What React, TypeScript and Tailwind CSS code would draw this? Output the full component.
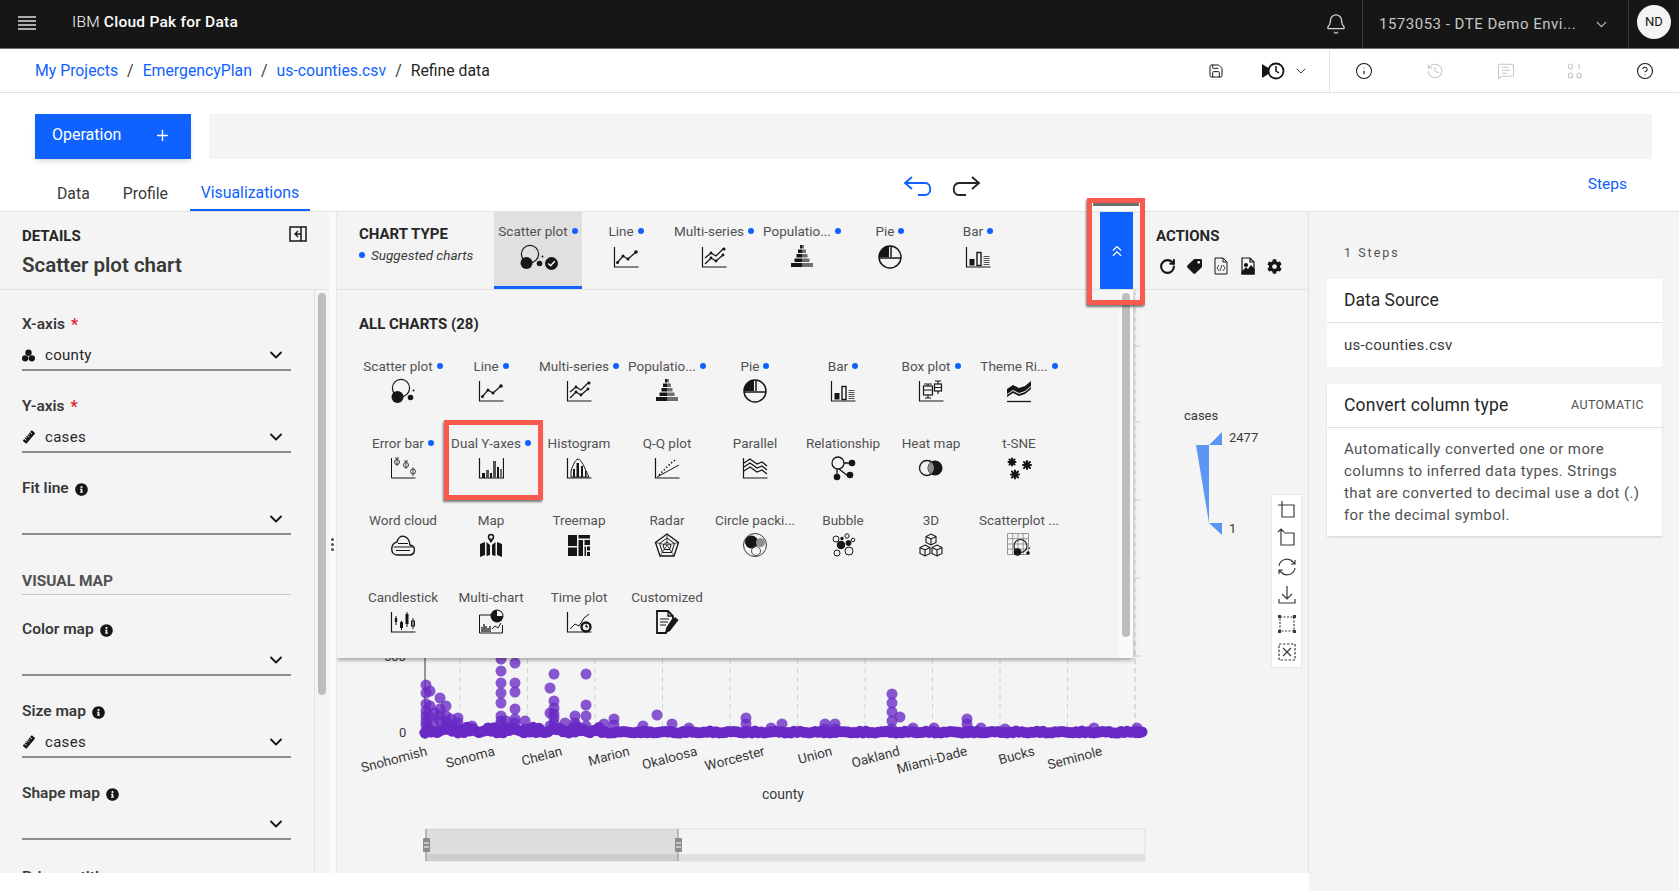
import { Bell, ChevronDown, ChevronsUp, CircleHelp, Info, History, MessageSquareText, Save, Plus, RotateCw } from 'lucide-react'
import { FaCog, FaInfoCircle, FaRuler, FaTag } from 'react-icons/fa'
import type { ReactNode } from 'react'

const k = '#161616'

const Axis = () => <path d="M1.5 3v20h24" fill="none" stroke={k} strokeWidth="1.2" />

const icons: Record<string, ReactNode> = {
  scatter: (
    <>
      <circle cx="11" cy="10" r="8.6" fill="none" stroke={k} strokeWidth="1.2" />
      <circle cx="7.5" cy="19" r="6" fill={k} />
      <circle cx="20.5" cy="19.5" r="2.8" fill={k} />
      <circle cx="23.5" cy="12.5" r="1" fill={k} />
    </>
  ),
  line: (
    <>
      <Axis />
      <path d="M4 19l6-7 5 3 8-7" fill="none" stroke={k} strokeWidth="1.3" />
      <circle cx="4.5" cy="18.5" r="1.5" fill={k} />
      <circle cx="10" cy="12" r="1.5" fill={k} />
      <circle cx="15" cy="15" r="1.5" fill={k} />
      <circle cx="23" cy="8" r="1.8" fill={k} />
    </>
  ),
  multi: (
    <>
      <Axis />
      <path d="M4 14l6-5 5 3 8-8M4 20l6-6 5 3 7-6" fill="none" stroke={k} strokeWidth="1.3" />
      <circle cx="10" cy="9" r="1.4" fill={k} />
      <circle cx="23" cy="5" r="1.6" fill={k} />
      <circle cx="10" cy="14" r="1.4" fill={k} />
      <circle cx="15" cy="17" r="1.4" fill={k} />
      <circle cx="22" cy="11" r="1.4" fill={k} />
    </>
  ),
  population: (
    <>
      <path d="M11 1h2v3.500h-2zM9 5.500h4V9H9zM7.500 10H13v3.500H7.500zM5.500 14.500H13V18H5.500zM2 19h11v4H2z" fill={k} />
      <path d="M13 1h2v3.500h-2zM13 5.500h4V9h-4zM13 10h5.500v3.500H13zM13 14.500h7.500V18H13zM13 19h11v4H13z" fill="#6f6f6f" />
    </>
  ),
  pie: (
    <>
      <circle cx="13" cy="13" r="11" fill="none" stroke={k} strokeWidth="1.5" />
      <path d="M2 13A11 11 0 0 1 12 2v11z" fill={k} />
      <path d="M2 14h22M14 2v11" fill="none" stroke={k} strokeWidth="1.5" />
    </>
  ),
  bar: (
    <>
      <Axis />
      <rect x="4.500" y="15" width="5" height="6.500" fill={k} />
      <rect x="12" y="8.500" width="4" height="13" fill="none" stroke={k} strokeWidth="1.4" />
      <path d="M18.500 12.500h6M18.500 14.500h6M18.500 16.500h6M18.500 18.500h6M18.500 20.500h6" stroke="#525252" strokeWidth="1" />
    </>
  ),
  box: (
    <>
      <Axis />
      <path d="M10 6v2M6 6h8M10 17v3M7 20h6M20 3v3M17 3h6M20 13v3" fill="none" stroke={k} strokeWidth="1.1" />
      <rect x="5.500" y="8" width="9" height="9" fill="none" stroke={k} strokeWidth="1.2" />
      <path d="M5.500 12h9M16.500 9.500h7" stroke={k} strokeWidth="1.1" />
      <rect x="16.500" y="6" width="7" height="7" fill="none" stroke={k} strokeWidth="1.2" />
    </>
  ),
  theme: (
    <>
      <path d="M1 11l6-4 6 3 6-2 6-5v5l-6 5-6 2-6-3-6 4z" fill={k} />
      <path d="M1 17l6-4 6 3 6-2 6-5v2l-6 5-6 2-6-3-6 4z" fill={k} />
      <path d="M1 23.500h24" stroke={k} strokeWidth="1.3" />
    </>
  ),
  error: (
    <>
      <path d="M1.500 3v20h24" fill="none" stroke={k} strokeWidth="1" />
      <circle cx="7" cy="7" r="2.500" fill="none" stroke="#393939" />
      <path d="M7 3v8M5 3h4M16 6v8M14 6h4M23 12v9" stroke="#393939" strokeWidth="0.9" />
      <circle cx="16" cy="10" r="2.500" fill="none" stroke="#393939" />
      <circle cx="23" cy="16.500" r="2.500" fill="none" stroke="#393939" />
    </>
  ),
  dual: (
    <>
      <path d="M1.500 3v20h24V3" fill="none" stroke={k} strokeWidth="1.2" />
      <rect x="4" y="18" width="3" height="5" fill={k} />
      <rect x="8" y="15" width="3" height="8" fill="#525252" />
      <rect x="12" y="18" width="2" height="5" fill={k} />
      <rect x="15" y="6" width="3" height="17" fill="#525252" />
      <rect x="19" y="12" width="2" height="11" fill={k} />
      <rect x="22" y="14" width="2" height="9" fill="#6f6f6f" />
    </>
  ),
  histogram: (
    <>
      <Axis />
      <path d="M5 22V16c2-6 4-11 7-12 4 1 6 8 11 18z" fill="none" stroke={k} strokeWidth="1" />
      <path d="M7 22V14h2v8zM10.500 22V8h2.500v14zM15 22V11h2v11zM19 22v-6h1.500v6z" fill={k} />
    </>
  ),
  qq: (
    <>
      <Axis />
      <path d="M3 22L25 10" stroke={k} strokeWidth="1" />
      <path d="M5 20l3-3 3-3 3-3 3-3 3-2 2-2" fill="none" stroke={k} strokeWidth="1.6" strokeDasharray="1.4 2" />
    </>
  ),
  parallel: (
    <>
      <Axis />
      <path d="M2 8l6-4 7 5 5-2 5 4M2 12l6-4 7 5 5-2 5 4M2 16l6-4 7 5 5-2 5 4" fill="none" stroke={k} strokeWidth="1.3" />
    </>
  ),
  relationship: (
    <>
      <path d="M12 8h10M9 14l9 7M7 14v8" stroke={k} strokeWidth="1.3" />
      <circle cx="8" cy="8" r="6" fill="#f4f4f4" stroke={k} strokeWidth="1.3" />
      <circle cx="22" cy="8" r="3.300" fill={k} />
      <circle cx="7" cy="22" r="3.300" fill={k} />
      <circle cx="20" cy="20" r="3.300" fill={k} />
    </>
  ),
  heat: (
    <>
      <circle cx="9" cy="13" r="7.500" fill="none" stroke={k} strokeWidth="1.3" />
      <circle cx="17" cy="13" r="7.500" fill={k} />
      <path d="M13 7a7.500 7.500 0 0 0 0 12 7.500 7.500 0 0 0 0-12z" fill="#8d8d8d" />
    </>
  ),
  tsne: (
    <g stroke={k} strokeWidth="2" strokeLinecap="round">
      <path d="M6 3.500v7M2.500 7h7M3.500 4.500l5 5M8.500 4.500l-5 5" />
      <path d="M21 6v8M17 10h8M18 7l6 6M24 7l-6 6" />
      <path d="M9 15.500v8M5 19.500h8M6 16.500l6 6M12 16.500l-6 6" />
    </g>
  ),
  cloud: (
    <>
      <path d="M7 23h12c7 0 7-9 1-10C19 3 9 1 7 10 0 11 0 23 7 23z" fill="none" stroke={k} strokeWidth="1.400" />
      <path d="M8 11.500h10M3.500 15h19M6 18.500h14" stroke={k} strokeWidth="1.100" />
    </>
  ),
  map: (
    <>
      <circle cx="13" cy="5" r="2.500" fill="none" stroke={k} strokeWidth="1.5" />
      <path d="M13 11l-2-3h4zM2 12l5-2v13l-5 2zM8.500 10l3.500 3v10l-3.500 1zM14 13l3.500-3v14L14 23zM19 10l5 2v13l-5-2z" fill={k} />
    </>
  ),
  treemap: (
    <path d="M2 3h9v11H2zM12.500 3H24v3.500H12.500zM12.500 8H17v16h-4.500zM18.500 8H24v5h-5.500zM2 15.500h9V24H2zM18.500 14.500H20v9.500h-1.500zM21 14.500h3v4h-3zM21 20h3v4h-3z" fill={k} />
  ),
  radar: (
    <g fill="none" stroke={k} strokeWidth="1">
      <path d="M13 2l11.500 8.500-4.500 13.500H6L1.500 10.500z" strokeWidth="1.3" />
      <path d="M13 6l7.500 5.500-3 9h-9l-3-9z" />
      <path d="M13 10l4 3-1.500 4.500h-5L9 13z" />
      <path d="M13 2v11M24.500 10.500L13 13M20 24l-7-11M6 24l7-11M1.500 10.500L13 13" strokeWidth="0.7" />
    </g>
  ),
  packing: (
    <>
      <circle cx="13" cy="13" r="11.500" fill="none" stroke="#393939" />
      <circle cx="9.500" cy="10" r="6.500" fill={k} />
      <circle cx="18.500" cy="10.500" r="4.500" fill="#8d8d8d" />
      <circle cx="14" cy="19" r="4.500" fill="none" stroke="#525252" />
    </>
  ),
  bubble: (
    <g fill="none" stroke={k} strokeWidth="1">
      <circle cx="6" cy="7" r="3" />
      <circle cx="17" cy="4" r="2.200" />
      <circle cx="23" cy="8" r="1.800" />
      <circle cx="7" cy="21" r="3" />
      <circle cx="19" cy="19" r="4" />
      <circle cx="11" cy="13" r="3.800" fill={k} />
      <circle cx="18.500" cy="11" r="2.500" fill={k} />
      <circle cx="12" cy="6.500" r="1.300" fill={k} />
    </g>
  ),
  cube: (
    <g fill="none" stroke={k} strokeWidth="1.1">
      <path d="M13 2l5 2.500v6L13 13l-5-2.500v-6zM8 4.500l5 2.500 5-2.500M13 7v6" />
      <path d="M7 13l5 2.500v6L7 24l-5-2.500v-6zM2 15.500L7 18l5-2.500M7 18v6" />
      <path d="M19 13l5 2.500v6L19 24l-5-2.500v-6zM14 15.500l5 2.500 5-2.500M19 18v6" />
    </g>
  ),
  matrix: (
    <>
      <path d="M1.500 1.500h21v21h-21zM1.500 6.700h21M1.500 12h21M1.500 17.200h21M6.700 1.500v21M12 1.500v21M17.200 1.500v21" fill="none" stroke="#8d8d8d" strokeWidth="0.9" />
      <circle cx="14.500" cy="14" r="6.500" fill="none" stroke={k} strokeWidth="1.1" />
      <circle cx="11.500" cy="20" r="3.800" fill={k} />
      <circle cx="22" cy="21" r="1.800" fill={k} />
      <circle cx="23.500" cy="16" r="0.800" fill={k} />
    </>
  ),
  candle: (
    <>
      <Axis />
      <path d="M6 7v9M11.500 12v9M17 3v15M23 9v11" stroke={k} strokeWidth="1" />
      <rect x="4.800" y="9" width="2.400" height="4" fill={k} />
      <rect x="10" y="13" width="3" height="6" fill={k} />
      <rect x="15.500" y="5" width="3" height="10" fill={k} />
      <rect x="21.500" y="12" width="3" height="5" fill="none" stroke={k} />
    </>
  ),
  multichart: (
    <>
      <path d="M13 6H1.500v18h23V16" fill="none" stroke={k} strokeWidth="1" />
      <path d="M4 23v-5M6 23v-8M8 23v-6M10 23v-4M12 23v-6" stroke={k} strokeWidth="1.3" />
      <path d="M14 20l3-3 3 2 3-5" fill="none" stroke={k} />
      <circle cx="19" cy="7" r="6.500" fill={k} />
      <path d="M19 7V1.500A5.500 5.500 0 0 1 24.500 7z" fill="#f4f4f4" />
    </>
  ),
  time: (
    <>
      <Axis />
      <path d="M4 20l5-5 4 2 5-8 5-4" fill="none" stroke={k} strokeWidth="1" />
      <circle cx="20" cy="18" r="4.500" fill="#f4f4f4" stroke={k} strokeWidth="2.400" />
      <path d="M20 15.500V18h2" stroke={k} />
    </>
  ),
  custom: (
    <>
      <path d="M3 2h11l5 5v3l-6 9-1 5H3z" fill="none" stroke={k} strokeWidth="1.800" />
      <path d="M14 2v5h5" fill="none" stroke={k} strokeWidth="1.300" />
      <path d="M6 10h9M6 13h8M6 16h6" stroke={k} strokeWidth="1.200" />
      <path d="M21 8l3.500 3L16 22l-4 2 .5-4.500z" fill={k} />
    </>
  ),
}

function ChartIcon({ name }: { name: string }) {
  return (
    <svg viewBox="0 0 26 26" className="w-[26px] h-[26px]">
      {icons[name]}
    </svg>
  )
}

const suggested = [
  { label: 'Scatter plot', icon: 'scatter' },
  { label: 'Line', icon: 'line' },
  { label: 'Multi-series', icon: 'multi' },
  { label: 'Populatio...', icon: 'population' },
  { label: 'Pie', icon: 'pie' },
  { label: 'Bar', icon: 'bar' },
]

const allCharts = [
  { label: 'Scatter plot', icon: 'scatter', dot: true },
  { label: 'Line', icon: 'line', dot: true },
  { label: 'Multi-series', icon: 'multi', dot: true },
  { label: 'Populatio...', icon: 'population', dot: true },
  { label: 'Pie', icon: 'pie', dot: true },
  { label: 'Bar', icon: 'bar', dot: true },
  { label: 'Box plot', icon: 'box', dot: true },
  { label: 'Theme Ri...', icon: 'theme', dot: true },
  { label: 'Error bar', icon: 'error', dot: true },
  { label: 'Dual Y-axes', icon: 'dual', dot: true },
  { label: 'Histogram', icon: 'histogram' },
  { label: 'Q-Q plot', icon: 'qq' },
  { label: 'Parallel', icon: 'parallel' },
  { label: 'Relationship', icon: 'relationship' },
  { label: 'Heat map', icon: 'heat' },
  { label: 't-SNE', icon: 'tsne' },
  { label: 'Word cloud', icon: 'cloud' },
  { label: 'Map', icon: 'map' },
  { label: 'Treemap', icon: 'treemap' },
  { label: 'Radar', icon: 'radar' },
  { label: 'Circle packi...', icon: 'packing' },
  { label: 'Bubble', icon: 'bubble' },
  { label: '3D', icon: 'cube' },
  { label: 'Scatterplot ...', icon: 'matrix' },
  { label: 'Candlestick', icon: 'candle' },
  { label: 'Multi-chart', icon: 'multichart' },
  { label: 'Time plot', icon: 'time' },
  { label: 'Customized', icon: 'custom' },
]

// columns of points, x in page px, y values in page px
const columns: [number, number[]][] = [
  [425, [684, 692, 703, 710, 715, 720, 724, 730]],
  [429, [690, 705, 716]],
  [433, [712, 722]],
  [439, [697, 708, 714, 720, 730]],
  [445, [705, 715, 720, 725]],
  [450, [718, 724]],
  [457, [717, 722, 727]],
  [471, [725]],
  [500, [658, 670, 682, 692, 702, 715, 720, 723, 730]],
  [505, [720, 726]],
  [514, [662, 682, 691, 708, 718, 722, 728]],
  [524, [720, 728]],
  [549, [687, 712, 725]],
  [553, [673, 700, 707, 713, 717, 722, 727]],
  [564, [722, 730]],
  [574, [715, 722, 725]],
  [585, [673, 704, 715, 725]],
  [603, [723]],
  [613, [718, 724]],
  [642, [725]],
  [656, [714]],
  [671, [723]],
  [688, [727]],
  [745, [717, 723, 730]],
  [770, [727]],
  [781, [723]],
  [824, [723, 728]],
  [834, [723, 728]],
  [891, [693, 702, 711, 720, 728]],
  [899, [716]],
  [912, [727]],
  [933, [727]],
  [966, [718, 723, 730]],
  [980, [727]],
  [1004, [728]],
  [1093, [727]],
  [1136, [727, 730]],
]

const baseline = Array.from({ length: 240 }, (_, i) => {
  const x = 424 + i * 3
  const y = 732 - Math.abs(Math.sin(i * 1.7) * Math.cos(i * 0.43)) * (x < 600 ? 6 : 2)
  return { x, y }
})

const xLabels = ['Snohomish', 'Sonoma', 'Chelan', 'Marion', 'Okaloosa', 'Worcester', 'Union', 'Oakland', 'Miami-Dade', 'Bucks', 'Seminole']

function ChartCanvas() {
  return (
    <svg viewBox="336 289 973 583" className="block w-[973px] h-[583px]" fontFamily="Roboto, sans-serif">
      {Array.from({ length: 11 }, (_, i) => (
        <line key={i} x1={459 + i * 67.5} x2={459 + i * 67.5} y1="640" y2="738" stroke="#d1d1d1" strokeDasharray="5 4" />
      ))}
      <line x1="1134" x2="1134" y1="289" y2="738" stroke="#d1d1d1" strokeDasharray="5 4" />
      {[345, 421, 499, 577, 655].map((y) => (
        <line key={y} x1="1134" x2="1140" y1={y} y2={y} stroke="#d1d1d1" />
      ))}
      <line x1="424" x2="424" y1="640" y2="738" stroke="#393939" />
      <line x1="418" x2="424" y1="731" y2="731" stroke="#393939" />
      <text x="398" y="736" fontSize="13" fill="#393939">0</text>
      <text x="383" y="660" fontSize="13" fill="#393939">500</text>
      <g fill="#6929c4">
        {columns.flatMap(([x, ys]) => ys.map((y) => <circle key={`${x}-${y}`} cx={x} cy={y} r="5.500" fillOpacity="0.78" />))}
        {baseline.map((p) => (
          <circle key={p.x} cx={p.x} cy={p.y} r="5.500" />
        ))}
      </g>
      {xLabels.map((label, i) => {
        const x = 427 + i * 67.5
        return (
          <text key={label} x={x} y="754" fontSize="13.500" fill="#393939" textAnchor="end" transform={`rotate(-15 ${x} 754)`}>
            {label}
          </text>
        )
      })}
      <text x="782" y="798" fontSize="14" fill="#393939" textAnchor="middle">county</text>

      <rect x="425" y="828" width="719" height="32" fill="#f4f4f4" stroke="#e0e0e0" />
      <rect x="425" y="853" width="719" height="7" fill="#e0e0e0" />
      <rect x="425" y="828" width="252" height="32" fill="#8d8d8d" fillOpacity="0.22" />
      <line x1="425" x2="425" y1="828" y2="860" stroke="#8d8d8d" />
      <line x1="677" x2="677" y1="828" y2="860" stroke="#8d8d8d" />
      <rect x="422" y="837" width="7" height="14" rx="1" fill="#8d8d8d" />
      <rect x="674" y="837" width="7" height="14" rx="1" fill="#8d8d8d" />
      <path d="M423 842h5M423 846h5M675 842h5M675 846h5" stroke="#fff" />

      <text x="1183" y="419" fontSize="13" fill="#393939">cases</text>
      <path d="M1221 431v13h-13zM1195 444h13v78zM1208 522h13v12z" fill="#5b96f5" />
      <text x="1228" y="441" fontSize="13" fill="#393939">2477</text>
      <text x="1228" y="532" fontSize="13" fill="#393939">1</text>
    </svg>
  )
}

function Toolbar() {
  const s = { fill: 'none', stroke: '#393939', strokeWidth: 1.2 }
  return (
    <div className="absolute left-[934px] top-[204px] w-[31px] h-[174px] bg-white border border-[#e8e8e8] flex flex-col items-center justify-between py-[5px]">
      <svg viewBox="0 0 20 20" className="w-[20px] h-[20px]" {...s}><path d="M5 5h12v12H5V5M5 1v7M1 5h8" /></svg>
      <svg viewBox="0 0 20 20" className="w-[20px] h-[20px]" {...s}><path d="M7 5h10v12H4V8M4 1v7M1 4l3-3 3 3" /></svg>
      <svg viewBox="0 0 20 20" className="w-[20px] h-[20px]" {...s}><path d="M2 9a8 8 0 0 1 14-4l2 2M18 11a8 8 0 0 1-14 4l-2-2M18 3v4h-4M2 17v-4h4" /></svg>
      <svg viewBox="0 0 20 20" className="w-[20px] h-[20px]" {...s}><path d="M10 1v13M5 9l5 5 5-5M2 14v4h16v-4" /></svg>
      <svg viewBox="0 0 20 20" className="w-[20px] h-[20px]" {...s}><path d="M3 3h14v14H3z" strokeDasharray="2 1.500" /><path d="M1 1h3v3H1zM16 1h3v3h-3zM1 16h3v3H1zM16 16h3v3h-3z" fill="#393939" stroke="none" /></svg>
      <svg viewBox="0 0 20 20" className="w-[20px] h-[20px]" {...s}><path d="M2 2h16v16H2z" strokeDasharray="2.500 1.500" /><path d="M6 6l8 8M14 6l-8 8" /></svg>
    </div>
  )
}

function Dot() {
  return <span className="w-[6px] h-[6px] rounded-full bg-[#0f62fe] shrink-0" />
}

function Label({ text, dot }: { text: string; dot?: boolean }) {
  return (
    <div className="h-[20px] flex items-center justify-center gap-[4px] text-[13.500px] text-[#525252] whitespace-nowrap">
      <span>{text}</span>
      {dot && <Dot />}
    </div>
  )
}

function Field({ label, required, info, value, icon }: { label: string; required?: boolean; info?: boolean; value?: string; icon?: ReactNode }) {
  return (
    <div className="mb-[26px]">
      <div className="h-[20px] flex items-center gap-[6px] text-[15.500px] font-semibold text-[#393939]">
        {label}
        {required && <span className="text-[#da1e28] text-[16px]">*</span>}
        {info && <FaInfoCircle className="w-[13px] h-[13px] text-[#161616]" />}
      </div>
      <div className="h-[36px] border-b-2 border-[#8d8d8d] flex items-center text-[15px] tracking-[0.3px] text-[#262626] pt-[6px]">
        <span className="w-[23px] flex items-center">{icon}</span>
        <span className="flex-1">{value}</span>
        <ChevronDown className="w-[20px] h-[20px] mr-[5px] text-[#161616]" strokeWidth={2.2} />
      </div>
    </div>
  )
}

const CountyIcon = (
  <svg viewBox="0 0 14 14" className="w-[13px] h-[13px]" fill="#161616">
    <circle cx="7" cy="4" r="3.400" />
    <circle cx="3.400" cy="10" r="3.400" />
    <circle cx="10.600" cy="10" r="3.400" />
  </svg>
)
const RulerIcon = <FaRuler className="w-[14px] h-[14px] text-[#161616] -rotate-[20deg]" />

export default function App() {
  return (
    <div className="w-[1679px] h-[891px] overflow-hidden bg-white flex flex-col font-['Roboto',sans-serif] text-[#161616]">
      {/* Top bar */}
      <header className="h-[49px] shrink-0 bg-[#161616] border-b border-[#6f6f6f] flex items-center text-white">
        <svg viewBox="0 0 18 14" className="w-[18px] h-[14px] ml-[18px] mb-[2px]" stroke="#e0e0e0" strokeWidth="1.400">
          <path d="M0 1h18M0 5h18M0 9h18M0 13h18" />
        </svg>
        <div className="ml-[36px] text-[15.500px] tracking-[0.25px] mb-[2px]">
          <span className="font-light">IBM </span>
          <span className="font-medium">Cloud Pak for Data</span>
        </div>
        <div className="flex-1" />
        <Bell className="w-[22px] h-[24px] text-[#d6d6d6] mr-[15px]" strokeWidth={1.4} />
        <div className="h-full w-[266px] border-l border-[#393939] flex items-center pl-[16px] text-[15px] text-[#c6c6c6] tracking-[0.5px]">
          <span className="flex-1">1573053 - DTE Demo Envi...</span>
          <ChevronDown className="w-[17px] h-[17px] mr-[18px]" strokeWidth={1.6} />
        </div>
        <div className="h-full w-[51px] border-l border-[#393939] flex items-center justify-center">
          <div className="w-[34px] h-[34px] rounded-full bg-[#f4f4f4] text-[#161616] text-[13px] flex items-center justify-center mb-[4px]">ND</div>
        </div>
      </header>

      {/* Breadcrumb */}
      <div className="h-[44px] shrink-0 border-b border-[#e0e0e0] flex items-center pl-[35px] text-[15.800px] pt-[1px]">
        <a className="text-[#0f62fe]">My Projects</a>
        <span className="mx-[9px] text-[#393939]">/</span>
        <a className="text-[#0f62fe]">EmergencyPlan</a>
        <span className="mx-[9px] text-[#393939]">/</span>
        <a className="text-[#0f62fe]">us-counties.csv</a>
        <span className="mx-[9px] text-[#393939]">/</span>
        <span className="text-[#262626]">Refine data</span>
        <div className="flex-1" />
        <Save className="w-[16px] h-[16px] mr-[37px]" strokeWidth={1.5} />
        <svg viewBox="0 0 24 20" className="w-[24px] h-[20px] mr-[8px]">
          <path d="M1 3l11 7-11 7z" fill={k} />
          <circle cx="15" cy="10" r="7.500" fill="#fff" stroke={k} strokeWidth="1.800" />
          <path d="M15 5v5l3 2" fill="none" stroke={k} strokeWidth="1.500" />
        </svg>
        <ChevronDown className="w-[16px] h-[16px] mr-[20px] text-[#393939]" strokeWidth={1.5} />
        <div className="h-full w-[350px] border-l border-[#e0e0e0] flex items-center justify-between pl-[25px] pr-[25px]">
          <Info className="w-[18px] h-[18px]" strokeWidth={1.4} />
          <History className="w-[18px] h-[18px] text-[#c6c6c6]" strokeWidth={1.4} />
          <MessageSquareText className="w-[18px] h-[18px] text-[#c6c6c6]" strokeWidth={1.4} />
          <svg viewBox="0 0 16 16" className="w-[16px] h-[16px]" fill="none" stroke="#c6c6c6" strokeWidth="1.200">
            <rect x="1.500" y="1" width="4" height="5" rx="2" />
            <path d="M12 1v5" />
            <rect x="1.500" y="10" width="4" height="5" rx="2" />
            <rect x="10" y="10" width="4" height="5" rx="2" />
          </svg>
          <CircleHelp className="w-[18px] h-[18px]" strokeWidth={1.4} />
        </div>
      </div>

      {/* Operation */}
      <div className="h-[66px] shrink-0 flex items-end pl-[35px] pr-[27px] gap-[18px]">
        <button className="w-[156px] h-[45px] bg-[#0f62fe] text-white text-[16px] flex items-center justify-between pl-[17px] pr-[20px] pb-[3px] shadow-md">
          Operation
          <Plus className="w-[17px] h-[17px]" strokeWidth={2} />
        </button>
        <div className="flex-1 h-[45px] bg-[#f4f4f4]" />
      </div>

      {/* Tabs */}
      <div className="h-[53px] shrink-0 border-b border-[#e0e0e0] flex items-end relative">
        <div className="flex pl-[37px] text-[15.800px] text-[#393939]">
          <div className="h-[36px] px-[20px] pt-[2px] flex items-center">Data</div>
          <div className="h-[36px] px-[13px] pt-[2px] flex items-center">Profile</div>
          <div className="h-[36px] ml-[9px] w-[120px] pt-[2px] flex items-center justify-center text-[#0f62fe] border-b-2 border-[#0f62fe]">Visualizations</div>
        </div>
        <div className="flex items-center gap-[18px] ml-[593px] pb-[15px]">
          <svg viewBox="0 0 30 20" className="w-[30px] h-[20px]" fill="none" stroke="#0f62fe" strokeWidth="1.900">
            <path d="M9 1L2 7l7 6M2 7h20c7 0 7 12 0 12h-7" />
          </svg>
          <svg viewBox="0 0 30 20" className="w-[30px] h-[20px]" fill="none" stroke="#262626" strokeWidth="1.900">
            <path d="M21 1l7 6-7 6M28 7H8c-7 0-7 12 0 12h7" />
          </svg>
        </div>
        <div className="flex-1" />
        <div className="text-[15.500px] text-[#0f62fe] mr-[52px] pb-[15px]">Steps</div>
      </div>

      {/* Workspace */}
      <div className="flex-1 min-h-0 flex">
        <div className="w-[1309px] shrink-0 flex flex-col">
          <div className="h-[661px] shrink-0 flex bg-[#f4f4f4] border-r border-[#e0e0e0]">
            {/* Details */}
            <aside className="w-[329px] shrink-0 flex flex-col overflow-hidden">
              <div className="h-[78px] shrink-0 border-b border-[#e0e0e0] pl-[22px] pr-[22px] pt-[14px] relative">
                <div className="text-[15px] font-bold text-[#262626] leading-[20px]">DETAILS</div>
                <div className="text-[20.500px] font-semibold text-[#393939] leading-[26px] mt-[6px]">Scatter plot chart</div>
                <svg viewBox="0 0 18 16" className="absolute right-[22px] top-[14px] w-[18px] h-[16px]" fill="none" stroke={k} strokeWidth="1.300">
                  <path d="M1 1h16v14H1zM12 1v14" strokeWidth="1.500" />
                  <path d="M9 5L6 8l3 3M6 8h6" />
                </svg>
              </div>
              <div className="flex-1 min-h-0 flex">
                <div className="w-[315px] shrink-0 pl-[22px] pr-[23px] pt-[25px] border-r border-[#e0e0e0]">
                  <Field label="X-axis" required value="county" icon={CountyIcon} />
                  <Field label="Y-axis" required value="cases" icon={RulerIcon} />
                  <Field label="Fit line" info />
                  <div className="h-[24px] mt-[36px] mb-[25px] border-b border-[#c6c6c6] text-[15.500px] leading-[20px] font-bold text-[#525252]">VISUAL MAP</div>
                  <Field label="Color map" info />
                  <Field label="Size map" info value="cases" icon={RulerIcon} />
                  <Field label="Shape map" info />
                  <div className="h-[20px] text-[15.500px] font-semibold text-[#393939]">Primary title</div>
                </div>
                <div className="flex-1 pt-[3px] flex justify-center">
                  <div className="w-[8px] h-[402px] rounded-full bg-[#bdbdbd]" />
                </div>
              </div>
            </aside>

            {/* Sash */}
            <div className="w-[7px] shrink-0 bg-[#fafafa] flex flex-col items-center justify-center gap-[2px] pt-[4px]">
              <span className="w-[3px] h-[3px] rounded-full bg-[#525252]" />
              <span className="w-[3px] h-[3px] rounded-full bg-[#525252]" />
              <span className="w-[3px] h-[3px] rounded-full bg-[#525252]" />
            </div>

            {/* Chart column */}
            <section className="flex-1 min-w-0 flex flex-col border-l border-[#e8e8e8] overflow-visible">
              <div className="h-[78px] shrink-0 border-b border-[#e0e0e0] flex relative">
                <div className="w-[157px] shrink-0 pl-[22px] pt-[12px]">
                  <div className="text-[15px] font-bold leading-[20px] text-[#262626]">CHART TYPE</div>
                  <div className="flex items-center gap-[6px] mt-[1px] text-[13.500px] italic text-[#393939]">
                    <Dot />
                    Suggested charts
                  </div>
                </div>
                {suggested.map((c, i) => (
                  <div key={c.label} className={`w-[88px] shrink-0 pt-[9px] flex flex-col items-center ${i === 0 ? 'bg-[#e0e0e0] border-b-[3px] border-[#0f62fe]' : ''}`}>
                    <Label text={c.label} dot />
                    <div className={`relative mt-[3px] ${i === 0 ? 'mr-[12px]' : ''}`}>
                      <ChartIcon name={c.icon} />
                      {i === 0 && (
                        <svg viewBox="0 0 14 14" className="absolute left-[26px] top-[13px] w-[13px] h-[13px]">
                          <circle cx="7" cy="7" r="7" fill={k} />
                          <path d="M3.500 7l2.500 2.500 4.500-5" fill="none" stroke="#fff" strokeWidth="1.500" />
                        </svg>
                      )}
                    </div>
                  </div>
                ))}
                <div className="w-[78px] shrink-0" />
                <button className="w-[33px] shrink-0 bg-[#0f62fe] flex items-center justify-center text-white">
                  <ChevronsUp className="w-[18px] h-[18px]" strokeWidth={1.5} />
                </button>
                <div className="absolute left-[750px] top-[-14px] w-[58px] h-[107px] z-10 border-[5px] border-[#fa5a4d] shadow-[-1px_2px_2px_rgba(0,0,0,0.5)]">
                  <div className="h-[3px] bg-[#6f6f6f] mx-[1px]" />
                </div>
                <div className="pl-[23px] pt-[14px]">
                  <div className="text-[15px] font-bold leading-[20px] text-[#262626]">ACTIONS</div>
                  <div className="flex items-center gap-[11px] mt-[11px] ml-[3px]">
                    <RotateCw className="w-[17px] h-[17px]" strokeWidth={3} />
                    <FaTag className="w-[15px] h-[15px] rotate-90" />
                    <svg viewBox="0 0 16 18" className="w-[16px] h-[18px]" fill="none" stroke={k} strokeWidth="1">
                      <path d="M2 1h8l4 4v12H2zM10 1v4h4" />
                      <path d="M6 8l-2 3 2 3M10 8l2 3-2 3M9 8l-2 6" strokeWidth="0.800" />
                    </svg>
                    <svg viewBox="0 0 16 18" className="w-[16px] h-[18px]" fill="none" stroke={k} strokeWidth="1.200">
                      <path d="M2 1h8l4 4v12H2zM10 1v4h4" />
                      <circle cx="6" cy="8" r="1.500" fill={k} />
                      <path d="M2 15l4-4 2 2 3-4 3 3v5H2z" fill={k} />
                    </svg>
                    <FaCog className="w-[15px] h-[15px]" />
                  </div>
                </div>
              </div>
              <div className="flex-1 min-h-0 relative overflow-hidden">
                <ChartCanvas />
                <Toolbar />
                {/* Chart picker dropdown */}
                <div className="absolute left-0 top-0 w-[796px] h-[368px] bg-[#f4f4f4] shadow-[0_2px_4px_rgba(0,0,0,0.35)] flex">
                  <div className="flex-1 pl-[22px] pt-[24px]">
                    <div className="text-[15px] font-bold leading-[20px] text-[#262626]">ALL CHARTS (28)</div>
                    <div className="grid grid-cols-[repeat(8,88px)] auto-rows-[77px] mt-[22px]">
                      {allCharts.map((c) => (
                        <div key={c.icon} className="relative flex flex-col items-center">
                          <Label text={c.label} dot={c.dot} />
                          <div className="mt-[2px]">
                            <ChartIcon name={c.icon} />
                          </div>
                          {c.icon === 'dual' && (
                            <div className="absolute left-[-3px] top-[-13px] w-[99px] h-[80px] border-[5px] border-[#fa5a4d] shadow-[-1px_2px_2px_rgba(0,0,0,0.5)]" />
                          )}
                        </div>
                      ))}
                    </div>
                  </div>
                  <div className="w-[14px] shrink-0 bg-[#fafafa] pt-[3px] flex justify-center">
                    <div className="w-[8px] h-[344px] rounded-full bg-[#bdbdbd]" />
                  </div>
                </div>
              </div>
            </section>
          </div>
          <div className="flex-1 bg-white" />
        </div>

        {/* Steps panel */}
        <aside className="flex-1 bg-[#f4f4f4] pl-[18px] pr-[17px] pt-[33px]">
          <div className="pl-[17px] text-[12.500px] text-[#525252] tracking-[2px] leading-[16px]">1 Steps</div>
          <div className="mt-[18px] bg-white">
            <div className="h-[44px] border-b border-[#e0e0e0] flex items-center pl-[17px] text-[17.500px] text-[#262626]">Data Source</div>
            <div className="h-[44px] flex items-center pl-[17px] text-[15px] tracking-[0.3px] text-[#393939]">us-counties.csv</div>
          </div>
          <div className="mt-[17px] bg-white shadow-[0_1px_2px_rgba(0,0,0,0.15)]">
            <div className="h-[44px] border-b border-[#e0e0e0] flex items-center justify-between pl-[17px] pr-[18px]">
              <span className="text-[17.500px] tracking-[0.2px] text-[#262626]">Convert column type</span>
              <span className="text-[12.500px] text-[#525252] tracking-[0.4px]">AUTOMATIC</span>
            </div>
            <p className="pl-[17px] pr-[20px] pt-[10px] pb-[10px] text-[15px] tracking-[0.4px] leading-[22px] text-[#525252]">
              Automatically converted one or more columns to inferred data types. Strings that are converted to decimal use a dot (.) for the decimal symbol.
            </p>
          </div>
        </aside>
      </div>
    </div>
  )
}
